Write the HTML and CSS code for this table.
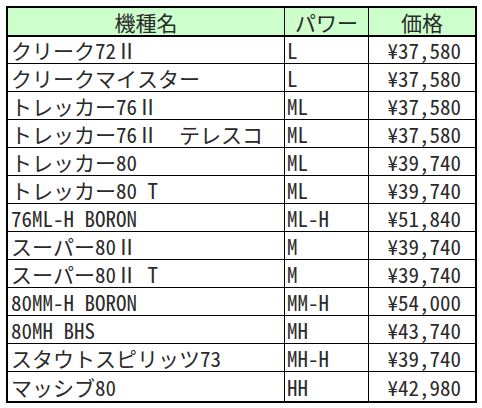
FILE: index.html
```html
<!DOCTYPE html>
<html lang="ja">
<head>
<meta charset="utf-8">
<title>価格表</title>
<link rel="stylesheet" href="styles.css">
</head>
<body>
<div class="sheet">
  <div class="row head">
    <div class="cell name">機種名</div>
    <div class="cell power">パワー</div>
    <div class="cell price">価格</div>
  </div>
  <div class="row"><div class="cell name">クリーク72Ⅱ</div><div class="cell power">L</div><div class="cell price">¥37,580</div></div>
  <div class="row"><div class="cell name">クリークマイスター</div><div class="cell power">L</div><div class="cell price">¥37,580</div></div>
  <div class="row"><div class="cell name">トレッカー76Ⅱ</div><div class="cell power">ML</div><div class="cell price">¥37,580</div></div>
  <div class="row"><div class="cell name">トレッカー76Ⅱ　テレスコ</div><div class="cell power">ML</div><div class="cell price">¥37,580</div></div>
  <div class="row"><div class="cell name">トレッカー80</div><div class="cell power">ML</div><div class="cell price">¥39,740</div></div>
  <div class="row"><div class="cell name">トレッカー80 T</div><div class="cell power">ML</div><div class="cell price">¥39,740</div></div>
  <div class="row"><div class="cell name">76ML-H BORON</div><div class="cell power">ML-H</div><div class="cell price">¥51,840</div></div>
  <div class="row"><div class="cell name">スーパー80Ⅱ</div><div class="cell power">M</div><div class="cell price">¥39,740</div></div>
  <div class="row"><div class="cell name">スーパー80Ⅱ T</div><div class="cell power">M</div><div class="cell price">¥39,740</div></div>
  <div class="row"><div class="cell name">80MM-H BORON</div><div class="cell power">MM-H</div><div class="cell price">¥54,000</div></div>
  <div class="row"><div class="cell name">80MH BHS</div><div class="cell power">MH</div><div class="cell price">¥43,740</div></div>
  <div class="row"><div class="cell name">スタウトスピリッツ73</div><div class="cell power">MH-H</div><div class="cell price">¥39,740</div></div>
  <div class="row"><div class="cell name">マッシブ80</div><div class="cell power">HH</div><div class="cell price">¥42,980</div></div>
</div>
</body>
</html>
```
FILE: styles.css
```css
html, body {
  margin: 0;
  padding: 0;
  background: #ffffff;
}

body {
  padding: 6px 0 0 6px;
  font-family: "Noto Sans Mono CJK JP", "Noto Sans CJK JP", monospace;
  font-size: 21px;
  font-weight: 300;
  color: #2a2a2a;
}

.sheet {
  width: 467px;
  border: 2px solid #000;
}

.row {
  display: grid;
  grid-template-columns: 276px 84px 107px;
  height: 28px;
  border-bottom: 1px solid #000;
  box-sizing: border-box;
}

.row:nth-child(2) {
  height: 27px;
}

.row:last-child {
  height: 29px;
  border-bottom: none;
}

.row.head {
  height: 29px;
  border-bottom: 2px solid #000;
  background: #ccffcc;
}

.cell {
  display: flex;
  align-items: center;
  white-space: pre;
  line-height: 24px;
}

.name {
  padding-left: 3px;
}

.power,
.price {
  border-left: 1px solid #000;
}

.power {
  padding-left: 2px;
}

.price {
  justify-content: flex-end;
  padding-right: 14px;
}

.head .cell {
  justify-content: center;
  padding-left: 0;
  padding-right: 0;
}
```
